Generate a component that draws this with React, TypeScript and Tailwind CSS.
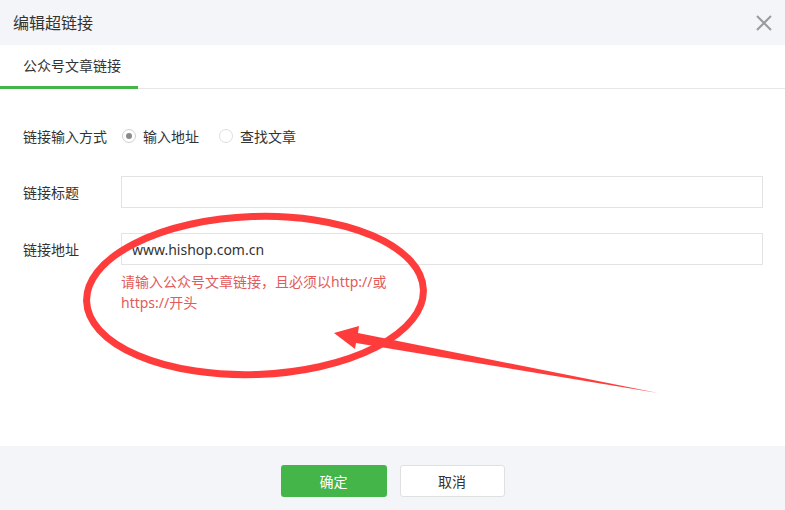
import React from "react";

const font = { fontFamily: '"Noto Sans", "Noto Sans CJK SC", sans-serif' };

function Radio({ checked, label }: { checked?: boolean; label: string }) {
  return (
    <label className="flex items-center gap-[7px] cursor-pointer">
      <span
        className={
          "flex h-[14px] w-[14px] items-center justify-center rounded-full border bg-white " +
          (checked ? "border-[#cfcfcf]" : "border-[#dedede]")
        }
      >
        {checked && <span className="h-[6px] w-[6px] rounded-full bg-[#8a8a8a]" />}
      </span>
      <span className="text-[14px] text-[#333]">{label}</span>
    </label>
  );
}

export default function App() {
  return (
    <div className="relative flex h-[510px] w-[785px] flex-col overflow-hidden bg-white" style={font}>
      {/* dialog header */}
      <div className="flex h-[45px] shrink-0 items-center justify-between bg-[#f4f5f9] pl-[13px] pr-[13px]">
        <span className="text-[16px] text-[#333]">编辑超链接</span>
        <button className="flex h-[16px] w-[16px] items-center justify-center">
          <svg width="16" height="16" viewBox="0 0 16 16">
            <path d="M1 1 L15 15 M15 1 L1 15" stroke="#9a9a9a" strokeWidth="2" />
          </svg>
        </button>
      </div>

      {/* tabs */}
      <div className="flex h-[44px] shrink-0 border-b border-[#e6e6e6]">
        <div className="-mb-px flex w-[138px] items-center border-b-[3px] border-[#44b549] pl-[23px] text-[14px] text-[#333]">
          公众号文章链接
        </div>
      </div>

      {/* form */}
      <div className="flex flex-1 flex-col pl-[23px] pr-[22px] pt-[31px]">
        <div className="flex h-[32px] items-center">
          <span className="w-[98px] text-[14px] text-[#333]">链接输入方式</span>
          <div className="flex items-center gap-[20px] pl-[1px]">
            <Radio checked label="输入地址" />
            <Radio label="查找文章" />
          </div>
        </div>

        <div className="mt-[24px] flex h-[32px] items-center">
          <span className="w-[98px] text-[14px] text-[#333]">链接标题</span>
          <input
            className="h-[32px] flex-1 border border-[#e3e3e3] px-[10px] text-[14px] text-[#333] outline-none"
            defaultValue=""
          />
        </div>

        <div className="mt-[25px] flex">
          <span className="flex h-[32px] w-[98px] items-center text-[14px] text-[#333]">链接地址</span>
          <div className="flex flex-1 flex-col">
            <input
              className="h-[32px] w-full border border-[#e3e3e3] px-[10px] text-[14px] text-[#333] outline-none"
              defaultValue="www.hishop.com.cn"
            />
            <p className="mt-[6px] text-[14px] leading-[21px] text-[#e35a5a]">
              请输入公众号文章链接，且必须以http://或
              <br />
              https://开头
            </p>
          </div>
        </div>
      </div>

      {/* footer actions */}
      <div className="flex h-[64px] shrink-0 justify-center gap-[13px] bg-[#f4f5f9] pt-[19px]">
        <button className="h-[32px] w-[106px] rounded-[3px] bg-[#44b549] text-[14px] text-white">确定</button>
        <button className="h-[32px] w-[105px] rounded-[3px] border border-[#e0e0e0] bg-white text-[14px] text-[#333]">
          取消
        </button>
      </div>

      {/* hand-drawn red annotation over the form */}
      <svg className="pointer-events-none absolute left-0 top-0" width="785" height="510" viewBox="0 0 785 510">
        <ellipse
          cx="255"
          cy="295.5"
          rx="168.5"
          ry="79"
          fill="none"
          stroke="#ff3c3c"
          strokeWidth="7"
          transform="rotate(-2 255 295.5)"
        />
        <polygon points="334,333 359,326 358,333 658,393 356,343 355,349" fill="#ff3c3c" />
      </svg>
    </div>
  );
}
